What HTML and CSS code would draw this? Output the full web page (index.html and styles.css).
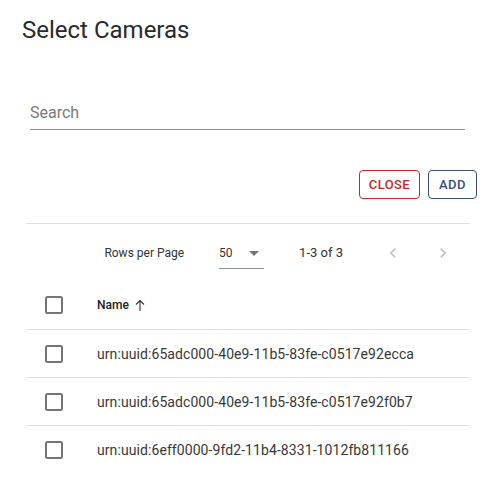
FILE: index.html
```html
<!DOCTYPE html>
<html>
<head>
<meta charset="utf-8">
<link rel="stylesheet" href="styles.css">
</head>
<body>
<div class="dialog">
  <h2 class="title">Select Cameras</h2>
  <div class="search">
    <input class="search-input" type="text" placeholder="Search">
  </div>
  <div class="actions">
    <button class="btn btn-close">CLOSE</button>
    <button class="btn btn-add">ADD</button>
  </div>
  <div class="table">
    <div class="toolbar">
      <span class="rows-label">Rows per Page</span>
      <div class="select">
        <span>50</span>
        <svg class="caret" width="24" height="24" viewBox="0 0 24 24"><path d="M7 10l5 5 5-5z" fill="#757575"/></svg>
      </div>
      <span class="displayed">1-3 of 3</span>
      <div class="pager">
        <span class="pbtn"><svg width="20" height="20" viewBox="0 0 24 24"><path d="M15.41 7.41L14 6l-6 6 6 6 1.41-1.41L10.83 12z" fill="#c4c4c4"/></svg></span>
        <span class="pbtn"><svg width="20" height="20" viewBox="0 0 24 24"><path d="M10 6L8.59 7.41 13.17 12l-4.58 4.59L10 18l6-6z" fill="#c4c4c4"/></svg></span>
      </div>
    </div>
    <div class="row head">
      <span class="cb"><svg width="24" height="24" viewBox="0 0 24 24"><rect x="4" y="4" width="16" height="16" rx="1.5" fill="none" stroke="#757575" stroke-width="2"/></svg></span>
      <span class="name-head">Name
        <svg class="sort" width="10" height="12" viewBox="0 0 10 12"><path d="M5 1.5V12M1 5.5L5 1.5L9 5.5" fill="none" stroke="#333" stroke-width="1.1"/></svg>
      </span>
    </div>
    <div class="row">
      <span class="cb"><svg width="24" height="24" viewBox="0 0 24 24"><rect x="4" y="4" width="16" height="16" rx="1.5" fill="none" stroke="#757575" stroke-width="2"/></svg></span>
      <span class="cell">urn:uuid:65adc000-40e9-11b5-83fe-c0517e92ecca</span>
    </div>
    <div class="row">
      <span class="cb"><svg width="24" height="24" viewBox="0 0 24 24"><rect x="4" y="4" width="16" height="16" rx="1.5" fill="none" stroke="#757575" stroke-width="2"/></svg></span>
      <span class="cell">urn:uuid:65adc000-40e9-11b5-83fe-c0517e92f0b7</span>
    </div>
    <div class="row last">
      <span class="cb"><svg width="24" height="24" viewBox="0 0 24 24"><rect x="4" y="4" width="16" height="16" rx="1.5" fill="none" stroke="#757575" stroke-width="2"/></svg></span>
      <span class="cell">urn:uuid:6eff0000-9fd2-11b4-8331-1012fb811166</span>
    </div>
  </div>
</div>
</body>
</html>
```
FILE: styles.css
```css
* { box-sizing: border-box; }
html, body { margin: 0; padding: 0; background: #fff; }
body {
  font-family: Roboto, "Liberation Sans", Arial, sans-serif;
  color: rgba(0,0,0,0.87);
  width: 495px;
  height: 500px;
  overflow: hidden;
}
.title {
  margin: 0;
  padding: 14px 0 0 22px;
  font-size: 24px;
  font-weight: 400;
  line-height: 32px;
  color: #2a2a2a;
}
.search {
  margin: 52px 30px 0 30px;
  border-bottom: 1px solid #8f8f8f;
}
.search-input {
  display: block;
  width: 100%;
  border: 0;
  outline: none;
  padding: 5px 0 7px 0;
  margin: 0;
  height: 31px;
  font-family: inherit;
  font-size: 16px;
  line-height: 19px;
  color: #333;
  background: transparent;
}
.search-input::placeholder { color: #7a7a7a; opacity: 1; }
.actions {
  display: flex;
  justify-content: flex-end;
  gap: 8px;
  margin-top: 40px;
  padding-right: 18px;
}
.btn {
  height: 29px;
  background: #fff;
  border-radius: 4px;
  font-family: inherit;
  font-size: 13px;
  font-weight: 500;
  letter-spacing: 0.03em;
  padding: 0 9px;
  margin: 0;
  cursor: pointer;
}
.btn-close { color: #c62828; border: 1px solid #c62828; min-width: 61px; }
.btn-add { color: #3d4f6e; border: 1px solid #3d4f6e; min-width: 49px; }
.table {
  margin: 24px 25px 0 26px;
  border-top: 1px solid #e0e0e0;
}
.toolbar {
  height: 57px;
  display: flex;
  align-items: center;
  justify-content: flex-end;
  padding-right: 3px;
  font-size: 12px;
  color: #333;
}
.rows-label { margin-right: 35px; }
.select {
  width: 45px;
  height: 30px;
  margin-top: 2px;
  display: flex;
  align-items: center;
  justify-content: space-between;
  border-bottom: 1px solid #8f8f8f;
  margin-right: 35px;
}
.caret { margin-right: -2px; }
.displayed { margin-right: 26px; font-size: 13px; }
.pager { display: flex; gap: 2px; }
.pbtn {
  width: 48px;
  height: 48px;
  display: flex;
  align-items: center;
  justify-content: center;
}
.row {
  display: flex;
  align-items: center;
  height: 48px;
  border-bottom: 1px solid #e0e0e0;
}
.row.head { height: 49px; }
.row.last { border-bottom: 0; }
.cb {
  width: 71px;
  padding-left: 16px;
  display: flex;
  align-items: center;
}
.name-head {
  font-size: 12px;
  font-weight: 500;
  color: #222;
  display: flex;
  align-items: center;
  gap: 6px;
}
.cell {
  font-size: 14px;
  letter-spacing: 0.08px;
  color: #383838;
}
```
